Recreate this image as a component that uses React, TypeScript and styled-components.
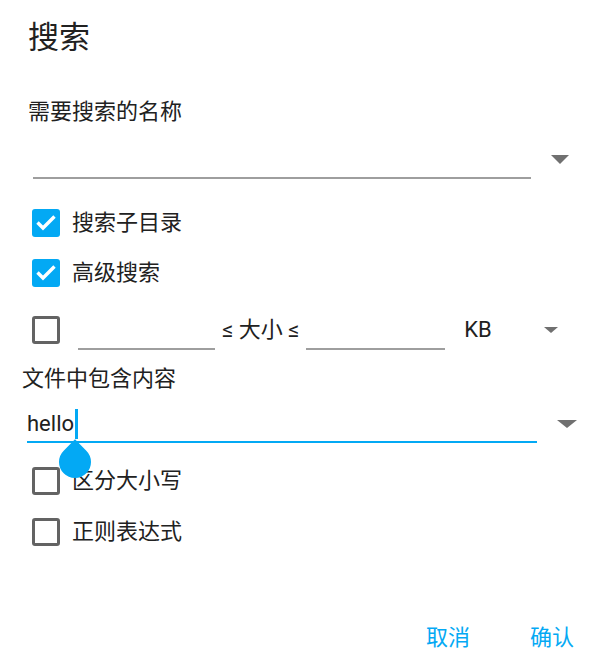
import React from 'react';
import styled, { createGlobalStyle } from 'styled-components';

const ACCENT = '#03a9f4';
const TEXT = '#212121';

const GlobalStyle = createGlobalStyle`
  html, body {
    margin: 0;
    padding: 0;
    background: #fff;
  }
  body {
    font-family: Roboto, "Noto Sans CJK SC", sans-serif;
    color: ${TEXT};
  }
`;

const Dialog = styled.div`
  width: 602px;
  height: 672px;
  display: flex;
  flex-direction: column;
  box-sizing: border-box;
  overflow: hidden;
`;

const Title = styled.h1`
  margin: 18px 0 0 28px;
  font-size: 31px;
  font-weight: 400;
  line-height: 40px;
`;

const FieldLabel = styled.div<{ $indent: number; $top: number }>`
  margin: ${({ $top }) => $top}px 0 0 ${({ $indent }) => $indent}px;
  font-size: 22px;
  line-height: 30px;
`;

const SelectRow = styled.div<{ $indent: number; $height: number }>`
  display: flex;
  align-items: flex-start;
  height: ${({ $height }) => $height}px;
  padding-left: ${({ $indent }) => $indent}px;
`;

const Field = styled.div<{ $width: number; $active?: boolean }>`
  box-sizing: border-box;
  width: ${({ $width }) => $width}px;
  height: 100%;
  display: flex;
  align-items: flex-end;
  padding-bottom: 2px;
  border-bottom: 2px solid ${({ $active }) => ($active ? ACCENT : '#9e9e9e')};
  font-size: 22px;
`;

const Arrow = styled.span<{ $w: number; $h: number; $left: number; $top: number }>`
  flex: none;
  width: 0;
  height: 0;
  margin: ${({ $top }) => $top}px 0 0 ${({ $left }) => $left}px;
  border-left: ${({ $w }) => $w / 2}px solid transparent;
  border-right: ${({ $w }) => $w / 2}px solid transparent;
  border-top: ${({ $h }) => $h}px solid #707070;
`;

const Value = styled.span`
  display: inline-flex;
  align-items: center;
  height: 30px;
  line-height: 30px;
`;

const Caret = styled.span`
  position: relative;
  display: inline-block;
  width: 3px;
  height: 30px;
  margin-left: 1px;
  background: ${ACCENT};
`;

const CaretHandle = styled.span`
  position: absolute;
  left: -16.5px;
  top: 37px;
  width: 32px;
  height: 32px;
  background: ${ACCENT};
  border-radius: 0 50% 50% 50%;
  transform: rotate(45deg);
`;

const CheckRow = styled.label<{ $top?: number; $height?: number }>`
  display: flex;
  align-items: center;
  height: ${({ $height }) => $height ?? 50}px;
  margin-top: ${({ $top }) => $top ?? 0}px;
  padding-left: 32px;
  font-size: 22px;
`;

const Box = styled.span<{ $checked: boolean }>`
  flex: none;
  box-sizing: border-box;
  width: 28px;
  height: 28px;
  border-radius: 3px;
  display: flex;
  align-items: center;
  justify-content: center;
  background: ${({ $checked }) => ($checked ? ACCENT : '#fff')};
  border: ${({ $checked }) => ($checked ? 'none' : '3px solid #636363')};
`;

const CheckText = styled.span`
  margin-left: 12px;
  line-height: 30px;
`;

const SizeInput = styled.span<{ $width: number; $left: number }>`
  flex: none;
  box-sizing: border-box;
  width: ${({ $width }) => $width}px;
  height: 40px;
  margin-left: ${({ $left }) => $left}px;
  border-bottom: 2px solid #9e9e9e;
`;

const SizeText = styled.span<{ $left: number }>`
  margin-left: ${({ $left }) => $left}px;
  line-height: 30px;
  white-space: pre;
`;

const Footer = styled.div`
  margin-top: auto;
  display: flex;
  justify-content: flex-end;
  gap: 60px;
  padding: 0 28px 14px 0;
`;

const TextButton = styled.button`
  border: none;
  background: none;
  padding: 0;
  font-family: inherit;
  font-size: 22px;
  line-height: 40px;
  color: ${ACCENT};
`;

const CheckBox: React.FC<{ checked: boolean }> = ({ checked }) => (
  <Box $checked={checked}>
    {checked && (
      <svg width="28" height="28" viewBox="0 0 28 28">
        <path
          d="M5.5 13.5 L11 19 L22.5 7.5"
          fill="none"
          stroke="#fff"
          strokeWidth="3.4"
        />
      </svg>
    )}
  </Box>
);

const Option: React.FC<{ label: string; checked: boolean; top?: number }> = ({
  label,
  checked,
  top,
}) => (
  <CheckRow $top={top}>
    <CheckBox checked={checked} />
    <CheckText>{label}</CheckText>
  </CheckRow>
);

export default function App() {
  return (
    <Dialog>
      <GlobalStyle />
      <Title>搜索</Title>

      <FieldLabel $indent={28} $top={39}>需要搜索的名称</FieldLabel>
      <SelectRow $indent={33} $height={52}>
        <Field $width={498} />
        <Arrow $w={19} $h={9} $left={20} $top={28} />
      </SelectRow>

      <Option label="搜索子目录" checked top={19} />
      <Option label="高级搜索" checked />

      <CheckRow $height={64}>
        <CheckBox checked={false} />
        <SizeInput $width={137} $left={18} />
        <SizeText $left={7}>≤ 大小 ≤</SizeText>
        <SizeInput $width={139} $left={7} />
        <SizeText $left={19}>KB</SizeText>
        <Arrow $w={15} $h={6} $left={52} $top={0} />
      </CheckRow>

      <FieldLabel $indent={22} $top={2}>文件中包含内容</FieldLabel>
      <SelectRow $indent={27} $height={49}>
        <Field $width={510} $active>
          <Value>
            hello
            <Caret>
              <CaretHandle />
            </Caret>
          </Value>
        </Field>
        <Arrow $w={20} $h={8} $left={20} $top={26} />
      </SelectRow>

      <Option label="区分大小写" checked={false} top={13} />
      <Option label="正则表达式" checked={false} top={1} />

      <Footer>
        <TextButton>取消</TextButton>
        <TextButton>确认</TextButton>
      </Footer>
    </Dialog>
  );
}
